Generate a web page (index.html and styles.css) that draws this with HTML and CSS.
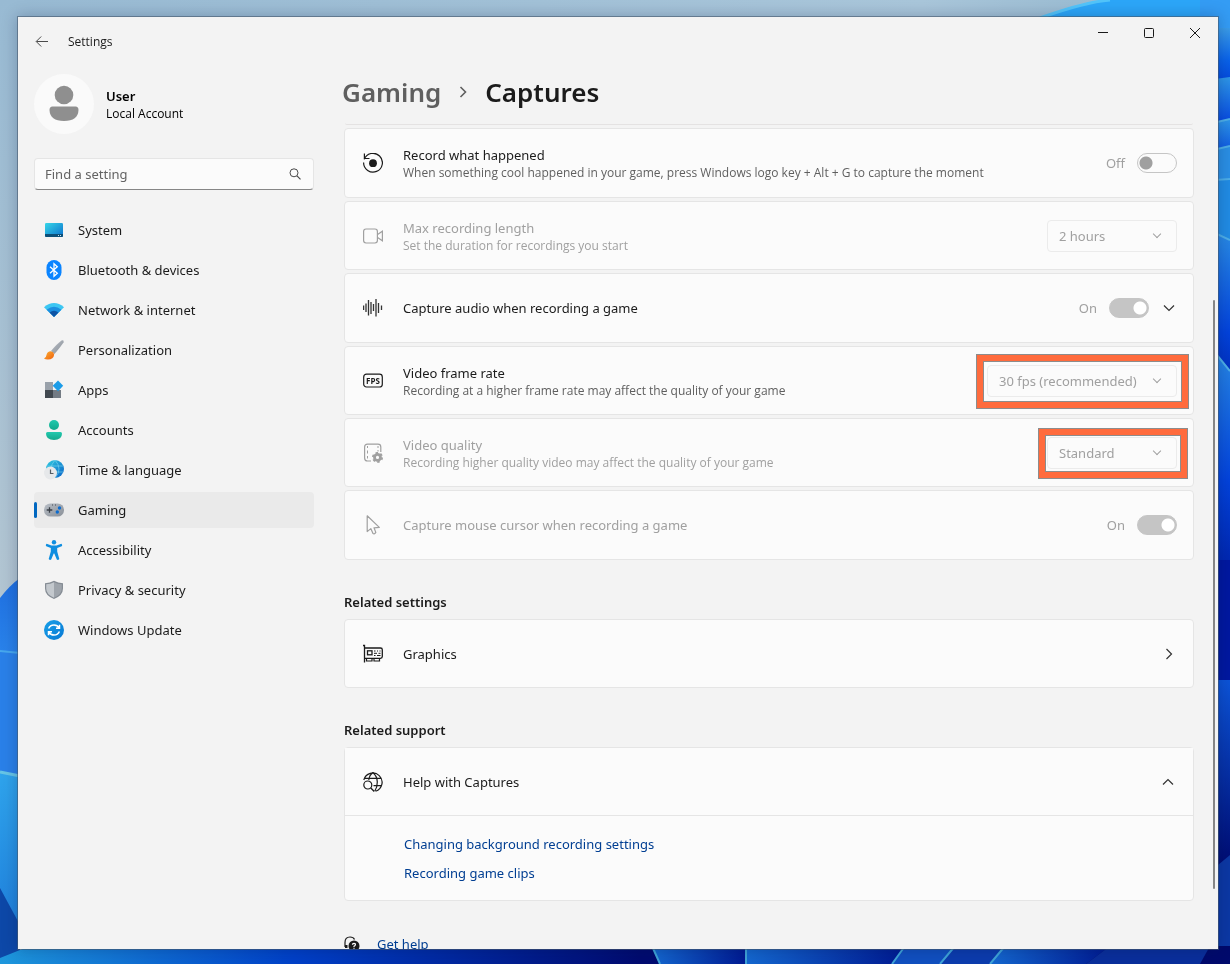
FILE: index.html
```html
<!DOCTYPE html>
<html lang="en">
<head>
<meta charset="utf-8">
<title>Settings</title>
<link rel="stylesheet" href="styles.css">
</head>
<body>
<svg class="wallpaper" viewBox="0 0 1230 964" preserveAspectRatio="none" aria-hidden="true">
  <defs>
    <linearGradient id="sky" x1="0" y1="0" x2="1" y2="0"><stop offset="0" stop-color="#98bad3"/><stop offset=".75" stop-color="#a9c6da"/><stop offset="1" stop-color="#8fb4cc"/></linearGradient>
    <linearGradient id="skyLeft" x1="0" y1="0" x2="0" y2="1"><stop offset="0" stop-color="#98bad3"/><stop offset="1" stop-color="#b4c6d2"/></linearGradient>
    <linearGradient id="p2" x1="0" y1="0" x2="0" y2="1"><stop offset="0" stop-color="#3a9ce8"/><stop offset=".6" stop-color="#0a63ea"/><stop offset="1" stop-color="#0348dc"/></linearGradient>
    <linearGradient id="p3" x1="0" y1="0" x2="0" y2="1"><stop offset="0" stop-color="#2e97e8"/><stop offset="1" stop-color="#0546e0"/></linearGradient>
    <linearGradient id="p4" x1="0" y1="0" x2="0" y2="1"><stop offset="0" stop-color="#2b8fe6"/><stop offset=".55" stop-color="#0343dc"/><stop offset="1" stop-color="#001a9c"/></linearGradient>
    <linearGradient id="p5" x1="0" y1="0" x2="0" y2="1"><stop offset="0" stop-color="#1f6fe0"/><stop offset=".3" stop-color="#2f8df0"/><stop offset="1" stop-color="#2f8df0"/></linearGradient>
    <linearGradient id="p6" x1="0" y1="0" x2="0" y2="1"><stop offset="0" stop-color="#2fa4ec"/><stop offset="1" stop-color="#1c78d8"/></linearGradient>
    <linearGradient id="floor" x1="0" y1="0" x2="1" y2="0"><stop offset="0" stop-color="#1e97dc"/><stop offset=".24" stop-color="#0040c8"/><stop offset=".52" stop-color="#000b70"/><stop offset="1" stop-color="#000a6c"/></linearGradient>
    <linearGradient id="f1" x1="0" y1="0" x2="1" y2="0"><stop offset="0" stop-color="#1468d0"/><stop offset="1" stop-color="#001a92"/></linearGradient>
    <linearGradient id="r1" x1="0" y1="0" x2="0" y2="1"><stop offset="0" stop-color="#0c54d8"/><stop offset="1" stop-color="#000a70"/></linearGradient>
  </defs>
  <rect width="1230" height="964" fill="url(#sky)"/>
  <rect width="30" height="640" fill="url(#skyLeft)"/>
  <path d="M1040 18Q1085 2 1110 0H1230V40H1040Z" fill="#2ca6f8"/>
  <path d="M1040 18Q1085 2 1110 0" stroke="#52c4fa" stroke-width="3" fill="none"/>
  <rect x="1200" y="0" width="30" height="40" fill="#349cf4"/>
  <rect x="1200" y="28" width="30" height="54" fill="url(#p2)"/>
  <path d="M1200 81L1230 77V124H1200Z" fill="url(#p3)"/>
  <path d="M1200 126L1230 119V160H1200Z" fill="url(#p3)"/>
  <path d="M1200 153L1230 146V190H1200Z" fill="#2a8fe4"/>
  <path d="M1200 181L1230 179V240H1200Z" fill="#218ce4"/>
  <path d="M1200 226L1230 240V420H1200Z" fill="url(#p4)"/>
  <path d="M1200 334L1230 371V600H1200Z" fill="url(#p4)"/>
  <path d="M1200 126L1230 119M1200 153L1230 146M1200 181L1230 179M1200 226L1230 240M1200 334L1230 371" stroke="#4eafe8" stroke-width="2" fill="none"/>
  <path d="M1200 560H1230V750H1200Z" fill="#0018a0"/>
  <rect x="1200" y="680" width="30" height="190" fill="url(#r1)"/>
  <path d="M1200 880L1230 855V964H1200Z" fill="#0c38a4"/>
  <path d="M0 598Q10 585 20 578V964H0Z" fill="url(#p5)"/>
  <path d="M0 651L20 653V780H0Z" fill="#2a80e8"/>
  <path d="M0 651L20 653" stroke="#47a8ee" stroke-width="2"/>
  <path d="M0 772L20 776V964H0Z" fill="url(#p6)"/>
  <path d="M0 772L20 776" stroke="#66c5e6" stroke-width="3"/>
  <path d="M0 888L20 925V964H0Z" fill="#0d48a8"/>
  <path d="M0 964V958L30 946H1230V964Z" fill="url(#floor)"/>
  <path d="M652 946H746V964H660Z" fill="url(#f1)"/>
  <path d="M746 946H905L892 964H746Z" fill="url(#f1)"/>
  <path d="M905 946H955L940 964H892Z" fill="#1150c0"/>
  <path d="M955 946H1005L990 964H940Z" fill="#0c3cae"/>
  <path d="M1005 946H1110L1086 964H990Z" fill="url(#f1)"/>
  <path d="M1110 946H1210L1200 964H1086Z" fill="#0a2f9c"/>
  <path d="M652 946L660 964M746 946V964M905 946L892 964M955 946L940 964M1005 946L990 964" stroke="#3fa4d8" stroke-width="2"/>
</svg>

<svg width="0" height="0" class="defs" aria-hidden="true">
  <defs>
    <linearGradient id="gSys" x1="0" y1="0" x2="1" y2="1"><stop offset="0" stop-color="#36d6e8"/><stop offset="1" stop-color="#0a6fcc"/></linearGradient>
    <linearGradient id="gGreen" x1="0" y1="0" x2="0" y2="1"><stop offset="0" stop-color="#22c9ae"/><stop offset="1" stop-color="#12a88c"/></linearGradient>
    <linearGradient id="gBlue" x1="0" y1="0" x2="1" y2="1"><stop offset="0" stop-color="#18a0e8"/><stop offset="1" stop-color="#0878d4"/></linearGradient>
    <linearGradient id="gGrey" x1="0" y1="0" x2="1" y2="1"><stop offset="0" stop-color="#b8bec6"/><stop offset="1" stop-color="#8a9098"/></linearGradient>
    <linearGradient id="gOrange" x1="0" y1="0" x2="1" y2="1"><stop offset="0" stop-color="#fbb034"/><stop offset="1" stop-color="#f0600c"/></linearGradient>
    <linearGradient id="gGlobe" x1="0" y1="0" x2="1" y2="1"><stop offset="0" stop-color="#30cbe0"/><stop offset="1" stop-color="#0b62c8"/></linearGradient>
  </defs>
</svg>

<div class="window">
  <aside class="sidebar">
    <div class="titlebar">
      <button class="icon-button" type="button" aria-label="Back"><svg width="14" height="12" viewBox="0 0 14 12"><path d="M13 5.500H1.500M6.200 .5L1.200 5.500L6.200 10.500" fill="none" stroke="#4a4a4a"/></svg></button>
      <span class="app-name">Settings</span>
    </div>
    <div class="account">
      <svg class="avatar" viewBox="0 0 60 60" aria-hidden="true"><circle cx="30" cy="30" r="30" fill="#fafafa"/><circle cx="30" cy="21" r="9.3" fill="#8f8f8f"/><path d="M18.500 32.500H41.500Q44.500 32.500 44.500 36Q44 47 30 47Q16 47 15.500 36Q15.500 32.500 18.500 32.500Z" fill="#8f8f8f"/></svg>
      <div>
        <div class="user-name">User</div>
        <div class="user-kind">Local Account</div>
      </div>
    </div>
    <form class="search" role="search">
      <input type="search" placeholder="Find a setting" aria-label="Find a setting">
      <svg width="14" height="14" viewBox="0 0 14 14" aria-hidden="true"><circle cx="6" cy="5.800" r="4" fill="none" stroke="#4a4a4a"/><path d="M9 8.800L12.500 12.300" stroke="#4a4a4a" stroke-width="1.200"/></svg>
    </form>
    <nav class="nav" aria-label="Settings sections">
      <a href="#system"><svg viewBox="0 0 20 20"><rect x="1" y="3" width="18" height="14" rx="1.200" fill="url(#gSys)"/><path d="M1 14H19V15.800Q19 17 17.800 17H2.200Q1 17 1 15.800Z" fill="#0b4f78"/><path d="M14 15.500h1M16 15.500h1" stroke="#bfe6f4"/></svg>System</a>
      <a href="#bluetooth"><svg viewBox="0 0 20 20"><rect x="2.500" width="15" height="20" rx="7.500" fill="#0a84ff"/><path d="M6 6.800L13.300 13.200L10 16.200V3.800L13.300 6.800L6 13.200" fill="none" stroke="#fff" stroke-width="1.300"/></svg>Bluetooth &amp; devices</a>
      <a href="#network"><svg viewBox="0 0 20 20"><path d="M0 7.200Q10-1 20 7.200L10 17Z" fill="#3cc6f2"/><path d="M2.600 9.800Q10 3.800 17.400 9.800L10 17Z" fill="#1b8fe0"/><path d="M5.600 12.600Q10 9 14.400 12.600L10 17Z" fill="#0d53a4"/></svg>Network &amp; internet</a>
      <a href="#personalization"><svg viewBox="0 0 20 20"><path d="M17.500 .6Q20-.3 19.600 2.200Q18 5 10.500 14L7 11Q13 4 17.500 .6Z" fill="url(#gGrey)"/><path d="M6.800 11.200Q9.800 11.800 10.200 14.400Q9.500 19.500 4 19.600Q1.500 19.700 0 18.600Q2.200 17.800 2.400 15.200Q3.200 11.200 6.800 11.200Z" fill="url(#gOrange)"/></svg>Personalization</a>
      <a href="#apps"><svg viewBox="0 0 20 20"><path d="M1 2H9V10H1Z" fill="#99a1aa"/><path d="M1 10H9V18H1Z" fill="#41484f"/><path d="M9 10H17V18H9Z" fill="#737b84"/><path d="M14 .4L19.200 5.800L14 11.200L8.700 5.800Z" fill="#1b9ce8"/></svg>Apps</a>
      <a href="#accounts"><svg viewBox="0 0 20 20"><circle cx="10" cy="5" r="5" fill="url(#gGreen)"/><path d="M3.500 12H16.500Q18 12 18 13.500Q18 20 10 20Q2 20 2 13.500Q2 12 3.500 12Z" fill="url(#gGreen)"/></svg>Accounts</a>
      <a href="#time"><svg viewBox="0 0 20 20"><circle cx="11" cy="9" r="9" fill="url(#gGlobe)"/><path d="M3 6H19M3 12H19M11 0Q3 9 11 18M11 0Q19 9 11 18" fill="none" stroke="#7fd8f0" stroke-width=".6"/><circle cx="6.500" cy="13" r="6.500" fill="#e6e8ea"/><path d="M6.500 9.500V13.500H9.500" fill="none" stroke="#555c64" stroke-width="1.200"/></svg>Time &amp; language</a>
      <a href="#gaming" class="current" aria-current="page"><svg viewBox="0 0 20 20"><rect y="3.500" width="20" height="13" rx="6.300" fill="url(#gGrey)"/><path d="M5.500 7.200V12.800M2.700 10H8.300" stroke="#3a4048" stroke-width="1.300"/><circle cx="15.500" cy="8" r="1.700" fill="#0b6cd0"/><circle cx="13.300" cy="12" r="1.700" fill="#0b6cd0"/><path d="M8 5h1M11 5h1" stroke="#444b53"/></svg>Gaming</a>
      <a href="#accessibility"><svg viewBox="0 0 20 20"><circle cx="10" cy="2.300" r="2.200" fill="#0f8ee0"/><path d="M2.600 3.800L7.500 5.400H12.500L17.400 3.800Q18.800 5 17.700 6.200L13.200 8V11.500L15.300 19Q14 20.500 12.800 19.500L10.300 13.500H9.700L7.200 19.500Q6 20.500 4.700 19L6.800 11.500V8L2.300 6.200Q1.200 5 2.600 3.800Z" fill="#0f8ee0"/></svg>Accessibility</a>
      <a href="#privacy"><svg viewBox="0 0 20 20"><path d="M10 .8Q14 3.200 19 3.200V8.500Q19 15.500 10 19Q1 15.500 1 8.500V3.200Q6 3.200 10 .8Z" fill="#858c94"/><path d="M10 2.300V17.700Q2.200 14.400 2.200 8.500V4.300Q6.500 4.100 10 2.300Z" fill="#c3c8cd"/><path d="M10 2.300V17.700Q17.800 14.400 17.800 8.500V4.300Q13.500 4.100 10 2.300Z" fill="#9ea4ab"/></svg>Privacy &amp; security</a>
      <a href="#update"><svg viewBox="0 0 20 20"><circle cx="10" cy="10" r="10" fill="url(#gBlue)"/><path d="M4.600 8.600Q6 5 10 5Q13.500 5 15.300 8M15.500 4.800V8.300H12M15.400 11.400Q14 15 10 15Q6.500 15 4.700 12M4.500 15.200V11.700H8" fill="none" stroke="#fff" stroke-width="1.500"/></svg>Windows Update</a>
    </nav>
  </aside>

  <main class="main">
    <div class="window-controls">
      <button class="icon-button" type="button" aria-label="Minimize"><svg width="12" height="12" viewBox="0 0 12 12"><path d="M1 5.500H11" stroke="#1a1a1a"/></svg></button>
      <button class="icon-button" type="button" aria-label="Maximize"><svg width="12" height="12" viewBox="0 0 12 12"><rect x="1.500" y="1.500" width="9" height="9" rx="1" fill="none" stroke="#1a1a1a"/></svg></button>
      <button class="icon-button" type="button" aria-label="Close"><svg width="12" height="12" viewBox="0 0 12 12"><path d="M1 1L11 11M11 1L1 11" stroke="#1a1a1a"/></svg></button>
    </div>
    <h1 class="breadcrumb">
      <a href="#gaming">Gaming</a>
      <svg width="8" height="12" viewBox="0 0 8 12" aria-hidden="true"><path d="M1.500 1L6.500 6L1.500 11" fill="none" stroke="#5f5f5f" stroke-width="1.600"/></svg>
      <span>Captures</span>
    </h1>

    <div class="scroller">
      <div class="card-edge"></div>
      <section class="cards">
        <div class="card tall">
          <svg class="glyph" viewBox="0 0 20 20"><path d="M1.200 6.400A9.400 9.400 0 1 1 .6 9.500" fill="none" stroke="#1b1b1b" stroke-width="1.200"/><path d="M1.400 .6V5.500H6.500" fill="none" stroke="#1b1b1b" stroke-width="1.200"/><circle cx="10" cy="10.200" r="3.900" fill="#1b1b1b"/></svg>
          <label class="label" for="record">Record what happened<small>When something cool happened in your game, press Windows logo key + Alt + G to capture the moment</small></label>
          <span class="state">Off</span>
          <input id="record" class="toggle" type="checkbox" role="switch" disabled>
        </div>
        <div class="card off">
          <svg class="glyph" viewBox="0 0 20 20"><rect x=".6" y="3" width="13.800" height="14" rx="2.400" fill="none" stroke="#a0a0a0" stroke-width="1.200"/><path d="M14.600 8.400L19.400 5.200V14.800L14.600 11.600" fill="none" stroke="#a0a0a0" stroke-width="1.200"/></svg>
          <label class="label" for="length">Max recording length<small>Set the duration for recordings you start</small></label>
          <span class="picker"><select id="length" disabled><option>2 hours</option></select></span>
        </div>
        <div class="card tall">
          <svg class="glyph" viewBox="0 0 20 20"><path d="M.6 7.500V12M3 5.500V14M5.500 2V17.500M8 4V16M10.500 6V13M13 1V18.500M15.500 5V15M18.500 7.500V12" stroke="#333" stroke-width="1.300"/></svg>
          <label class="label" for="audio">Capture audio when recording a game</label>
          <span class="state">On</span>
          <input id="audio" class="toggle" type="checkbox" role="switch" checked disabled>
          <button class="icon-button" type="button" aria-label="Expand"><svg width="12" height="8" viewBox="0 0 12 8"><path d="M1 1.500L6 6.500L11 1.500" fill="none" stroke="#333" stroke-width="1.200"/></svg></button>
        </div>
        <div class="card">
          <svg class="glyph" viewBox="0 0 20 20"><rect x=".7" y="3.200" width="18.600" height="12.800" rx="2.800" fill="none" stroke="#1b1b1b" stroke-width="1.200"/><text x="10" y="12.600" text-anchor="middle" class="fps">FPS</text></svg>
          <label class="label" for="rate">Video frame rate<small>Recording at a higher frame rate may affect the quality of your game</small></label>
          <span class="picker wide"><select id="rate" disabled><option>30 fps (recommended)</option></select><span class="mark mark-rate"></span></span>
        </div>
        <div class="card off">
          <svg class="glyph" viewBox="0 0 20 20"><path d="M8 18H4.500Q1.600 18 1.600 15V4Q1.600 1.200 4.500 1.200H15Q17.800 1.200 17.800 4V9" fill="none" stroke="#a0a0a0" stroke-width="1.200"/><path d="M4.500 3V5M4.500 7.500V10.500M4.500 13V15.500M15 3V5M15 7V8.500" stroke="#a0a0a0"/><circle cx="14.500" cy="14.400" r="3" fill="none" stroke="#a0a0a0" stroke-width="2.800"/><circle cx="14.500" cy="14.400" r="4.600" fill="none" stroke="#a0a0a0" stroke-width="1.800" stroke-dasharray="2.400 2.417"/></svg>
          <label class="label" for="quality">Video quality<small>Recording higher quality video may affect the quality of your game</small></label>
          <span class="picker"><select id="quality" disabled><option>Standard</option></select><span class="mark mark-quality"></span></span>
        </div>
        <div class="card tall off">
          <svg class="glyph" viewBox="0 0 20 20"><path d="M4.200 .8V16.600L7.800 13.600L10 18.600Q11.500 19.600 12.800 17.400L11 12.800L16.300 12.400Z" fill="none" stroke="#a0a0a0" stroke-width="1.200" stroke-linejoin="round"/></svg>
          <label class="label" for="cursor">Capture mouse cursor when recording a game</label>
          <span class="state">On</span>
          <input id="cursor" class="toggle" type="checkbox" role="switch" checked disabled>
        </div>
      </section>

      <h2>Related settings</h2>
      <a class="card" href="#graphics">
        <svg class="glyph" viewBox="0 0 20 20"><path d="M0 1.500H1.500V18.500M1.500 4H17.500Q19.300 4 19.300 5.800V12.500Q19.300 14.300 17.500 14.300H1.500" fill="none" stroke="#1b1b1b" stroke-width="1.300"/><rect x="4.500" y="6.800" width="4.500" height="4" fill="none" stroke="#1b1b1b" stroke-width="1.300"/><path d="M11 7h1.500M14 7h1M16.500 7h1M11 9.300h3M15.500 9.300h2M11 11.500h1.500M14 11.500h3.500" stroke="#1b1b1b"/><path d="M3.500 14.500V17H9V14.500M11 14.500V17H16.500V14.500" fill="none" stroke="#1b1b1b" stroke-width="1.200"/></svg>
        <span class="label">Graphics</span>
        <svg class="chevron" width="8" height="12" viewBox="0 0 8 12"><path d="M1.500 1L6.500 6L1.500 11" fill="none" stroke="#333" stroke-width="1.200"/></svg>
      </a>

      <h2>Related support</h2>
      <section class="support">
        <div class="card">
          <svg class="glyph" viewBox="0 0 20 20"><path d="M.8 8A9.300 9.300 0 1 1 12.600 19.200M1.800 6.300H18.300M10.500 13.600H18.600M10 .8Q6.300 3 5.800 8M10 .8Q14.300 4.500 14.300 10Q14.300 15.500 11.800 19" fill="none" stroke="#1b1b1b" stroke-width="1.200"/><circle cx="4.800" cy="13" r="4" fill="none" stroke="#1b1b1b" stroke-width="1.200"/><path d="M7.800 16L11.300 19.500" stroke="#1b1b1b" stroke-width="1.300"/></svg>
          <span class="label">Help with Captures</span>
          <button class="icon-button" type="button" aria-label="Collapse"><svg width="12" height="8" viewBox="0 0 12 8"><path d="M1 6.500L6 1.500L11 6.500" fill="none" stroke="#333" stroke-width="1.200"/></svg></button>
        </div>
        <div class="links">
          <a href="#background-recording">Changing background recording settings</a>
          <a href="#game-clips">Recording game clips</a>
        </div>
      </section>

      <a class="get-help" href="#help"><svg width="16" height="16" viewBox="0 0 16 16"><path d="M1 11V6.500Q1 1 6 1Q9.500 1 10.500 3.500" fill="none" stroke="#1b1b1b" stroke-width="1.200"/><path d="M1 9H3.500V12H1Z" fill="#1b1b1b"/><circle cx="10" cy="10" r="5.500" fill="#1b1b1b"/><path d="M8.400 8.800Q8.400 7.300 10 7.300Q11.600 7.400 11.400 8.900Q11.100 9.700 10 10.300V11.300M10 12.200V13.300" fill="none" stroke="#fff" stroke-width="1.200"/></svg>Get help</a>
    </div>
  </main>
  <div class="scroll-thumb"></div>
</div>
</body>
</html>
```
FILE: styles.css
```css
* { box-sizing: border-box; }

body {
  margin: 0;
  height: 100vh;
  display: flex;
  padding: 16px 11px 14px 17px;
  overflow: hidden;
  font-family: "Noto Sans", "Open Sans", sans-serif;
  font-size: 13px;
  line-height: 20px;
  color: #1b1b1b;
}

a { color: inherit; text-decoration: none; }

.wallpaper {
  position: fixed;
  inset: 0;
  width: 100%;
  height: 100%;
  z-index: -1;
}

.defs { position: absolute; }

.window {
  position: relative;
  flex: 1;
  display: flex;
  min-width: 0;
  overflow: hidden;
  background: #f3f3f3;
  background-clip: padding-box;
  border: 1px solid rgba(70, 90, 110, .6);
  box-shadow: 0 0 14px rgba(0, 20, 60, .25);
}

.icon-button {
  display: flex;
  align-items: center;
  justify-content: center;
  padding: 0;
  border: 0;
  background: none;
}

/* Sidebar */
.sidebar {
  flex: none;
  width: 296px;
  padding-left: 16px;
}

.titlebar {
  display: flex;
  align-items: center;
  gap: 18px;
  height: 49px;
}

.titlebar .icon-button { width: 16px; height: 16px; }

.app-name,
.user-kind,
.label small {
  font-family: "Open Sans", "Noto Sans", sans-serif;
  font-size: 12px;
}

.account {
  display: flex;
  align-items: center;
  gap: 12px;
  height: 60px;
  margin-top: 8px;
  color: #000;
}

.avatar { width: 60px; height: 60px; }

.user-name { font-weight: 600; line-height: 20px; }
.user-kind { line-height: 16px; }

.search {
  display: flex;
  align-items: center;
  height: 32px;
  margin-top: 24px;
  padding: 0 11px 0 10px;
  background: #fbfbfb;
  border: 1px solid #e5e5e5;
  border-bottom-color: #868686;
  border-radius: 4px;
}

.search input {
  flex: 1;
  min-width: 0;
  padding: 0;
  border: 0;
  background: none;
  font: inherit;
}

.search input::placeholder { color: #636363; opacity: 1; }

.nav {
  display: grid;
  gap: 4px;
  margin-top: 22px;
}

.nav a {
  display: flex;
  align-items: center;
  gap: 14px;
  height: 36px;
  padding: 0 10px;
  border-radius: 4px;
}

.nav svg { width: 20px; height: 20px; }

.nav .current {
  position: relative;
  background: #eaeaea;
}

.nav .current::before {
  content: "";
  position: absolute;
  left: 0;
  top: 10px;
  width: 3px;
  height: 16px;
  border-radius: 2px;
  background: #0067c0;
}

/* Main column */
.main {
  flex: 1;
  min-width: 0;
  display: flex;
  flex-direction: column;
  padding: 0 24px 0 30px;
}

.window-controls {
  display: flex;
  justify-content: flex-end;
  margin-right: -24px;
  height: 32px;
}

.window-controls .icon-button { width: 46px; height: 32px; }

.breadcrumb {
  display: flex;
  align-items: center;
  gap: 18px;
  height: 36px;
  margin: 25px 0 13px -2px;
  font-size: 26px;
  font-weight: 600;
  line-height: 36px;
}

.breadcrumb a { color: #5f5f5f; }

.scroller {
  flex: 1;
  min-height: 0;
  overflow: hidden;
}

.card-edge {
  height: 2px;
  margin: 0 1px 3px;
  border-bottom: 1px solid #e4e2e2;
  border-radius: 0 0 4px 4px;
}

.cards { display: grid; gap: 3px; }

.card {
  display: flex;
  align-items: center;
  min-height: 69px;
  padding: 0 16px 0 18px;
  background: #fbfbfb;
  border: 1px solid #e5e5e5;
  border-radius: 4px;
}

.tall { min-height: 70px; }

.glyph { flex: none; width: 20px; height: 20px; margin-right: 20px; }

.fps { font: 700 8px "Open Sans", sans-serif; fill: #1b1b1b; }

.label { flex: 1; min-width: 0; }

.label small {
  display: block;
  line-height: 16px;
  color: #5f5f5f;
}

.off .label, .off small, .state { color: #a0a0a0; }

.state { margin-right: 12px; }

.toggle {
  appearance: none;
  flex: none;
  width: 40px;
  height: 20px;
  margin: 0;
  border: 1px solid #c5c5c5;
  border-radius: 10px;
  background: radial-gradient(circle at 8px 9px, #a0a0a0 6px, transparent 7px);
}

.toggle:checked {
  background: radial-gradient(circle at 30px 9px, #fff 6px, #c5c5c5 7px);
}

.card .icon-button { width: 16px; height: 16px; }
.toggle + .icon-button { margin-left: 12px; }

.chevron { margin-right: 4px; }

.picker { position: relative; width: 130px; }
.wide { width: 190px; }

.picker select {
  appearance: none;
  display: block;
  width: 100%;
  height: 32px;
  padding: 0 11px;
  border: 1px solid #ebebeb;
  border-radius: 4px;
  background: none;
  font: inherit;
  color: #a0a0a0;
  opacity: 1;
}

.picker::after {
  content: "";
  position: absolute;
  right: 17px;
  top: 11px;
  width: 5px;
  height: 5px;
  border: solid #a0a0a0;
  border-width: 0 1px 1px 0;
  transform: rotate(45deg);
}

/* Highlight frames drawn over the drop-downs */
.mark {
  position: absolute;
  border: 6px solid #ff6b3d;
  outline: 1px solid #8c8c8c;
  box-shadow: inset 0 0 0 1px #8c8c8c;
}

.mark-rate { inset: -10px -11px -11px -10px; }
.mark-quality { inset: -8px -10px -9px -8px; }

h2 {
  margin: 32px 0 7px;
  font-size: 13px;
  font-weight: 600;
  line-height: 20px;
}

.support {
  background: #fbfbfb;
  border: 1px solid #e5e5e5;
  border-radius: 4px;
}

.support .card {
  min-height: 68px;
  padding: 0 17px 0 18px;
  border-width: 0 0 1px;
  border-radius: 0;
}

.links {
  display: grid;
  gap: 9px;
  justify-items: start;
  padding: 18px 59px 17px;
}

.links a, .get-help { color: #003e92; }

.get-help {
  display: flex;
  align-items: center;
  gap: 17px;
  margin-top: 33px;
}

.scroll-thumb {
  position: absolute;
  right: 3px;
  top: 283px;
  bottom: 60px;
  width: 2px;
  border-radius: 1px;
  background: #868686;
}
```
